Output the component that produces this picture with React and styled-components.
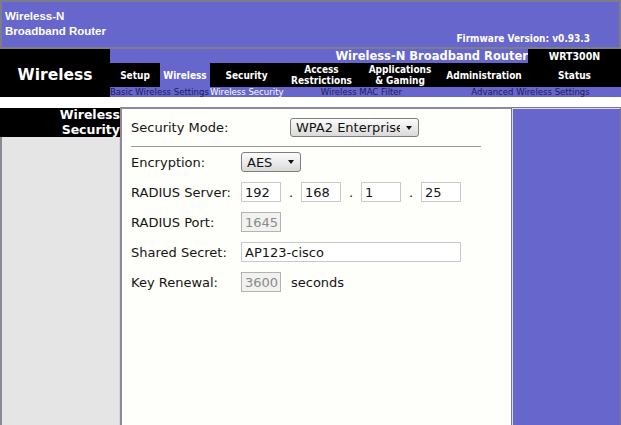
import React from "react";
import styled, { createGlobalStyle } from "styled-components";

const GlobalStyle = createGlobalStyle`
  html, body {
    margin: 0;
    padding: 0;
    background: #ffffff;
    font-family: "DejaVu Sans", Verdana, sans-serif;
  }
`;

const PURPLE = "#6666cc";

const tabs = [
  { label: "Setup", w: 50 },
  { label: "Wireless", w: 50, active: true },
  { label: "Security", w: 73 },
  { label: ["Access", "Restrictions"], w: 77 },
  { label: ["Applications", "& Gaming"], w: 80 },
  { label: "Administration", w: 88 },
  { label: "Status", w: 93 },
];

const subTabs = [
  { label: "Basic Wireless Settings", w: 100, align: "left" },
  { label: "Wireless Security", w: 73, align: "left", active: true },
  { label: "Wireless MAC Filter", w: 157, align: "center" },
  { label: "Advanced Wireless Settings", w: 181, align: "center" },
];

const App = () => {
  return (
    <Page>
      <GlobalStyle />
      <Header>
        <Product>
          Wireless-N
          <br />
          Broadband Router
        </Product>
        <Firmware>Firmware Version: v0.93.3</Firmware>
      </Header>

      <NavBand>
        <Brand>Wireless</Brand>
        <NavRight>
          <TitleBar>
            <TitleCell>Wireless-N Broadband Router</TitleCell>
            <ModelCell>WRT300N</ModelCell>
          </TitleBar>
          <TabRow>
            {tabs.map((t, i) => (
              <Tab key={i} $w={t.w} $active={t.active}>
                {Array.isArray(t.label) ? (
                  <span>
                    {t.label[0]}
                    <br />
                    {t.label[1]}
                  </span>
                ) : (
                  t.label
                )}
              </Tab>
            ))}
          </TabRow>
          <SubRow>
            {subTabs.map((s, i) => (
              <SubTab key={i} $w={s.w} $align={s.align} $active={s.active}>
                {s.label}
              </SubTab>
            ))}
          </SubRow>
        </NavRight>
      </NavBand>

      <Spacer />

      <Main>
        <Side>
          <SideTitle>
            Wireless
            <br />
            Security
          </SideTitle>
          <SidePanel />
        </Side>

        <Content>
          <ModeRow>
            <ModeLabel>Security Mode:</ModeLabel>
            <Select $w={129}>
              <SelectText>WPA2 Enterprise</SelectText>
              <Arrow />
            </Select>
          </ModeRow>
          <Rule />
          <FieldGrid>
            <Label>Encryption:</Label>
            <Select $w={60} $h={20}>
              <SelectText>AES</SelectText>
              <Arrow />
            </Select>

            <Label>RADIUS Server:</Label>
            <IpGroup>
              <TextBox $w={40} defaultValue="192" readOnly />
              <Dot>.</Dot>
              <TextBox $w={40} defaultValue="168" readOnly />
              <Dot>.</Dot>
              <TextBox $w={40} defaultValue="1" readOnly />
              <Dot>.</Dot>
              <TextBox $w={40} defaultValue="25" readOnly />
            </IpGroup>

            <Label>RADIUS Port:</Label>
            <TextBox $w={40} defaultValue="1645" disabled />

            <Label>Shared Secret:</Label>
            <TextBox $w={220} defaultValue="AP123-cisco" readOnly />

            <Label>Key Renewal:</Label>
            <IpGroup>
              <TextBox $w={40} defaultValue="3600" disabled />
              <Unit>seconds</Unit>
            </IpGroup>
          </FieldGrid>
        </Content>

        <Aside />
      </Main>
    </Page>
  );
};

export default App;

const Page = styled.div`
  width: 621px;
  overflow: hidden;
`;

const Header = styled.header`
  height: 49px;
  box-sizing: border-box;
  background: ${PURPLE};
  border: 2px solid #7c7c8a;
  display: flex;
  justify-content: space-between;
  color: #ffffff;
`;

const Product = styled.div`
  font: bold 11.5px/15px "Liberation Sans", Arial, sans-serif;
  padding: 7px 0 0 3px;
`;

const Firmware = styled.div`
  align-self: flex-end;
  font-family: "DejaVu Sans Condensed", "DejaVu Sans", sans-serif;
  font-stretch: condensed;
  font-weight: bold;
  font-size: 10px;
  line-height: 12px;
  padding: 0 29px 2px 0;
`;

const NavBand = styled.nav`
  display: flex;
  height: 48px;
`;

const Brand = styled.div`
  width: 110px;
  background: #000000;
  color: #ffffff;
  font: bold 15.5px "DejaVu Sans", Verdana, sans-serif;
  display: flex;
  align-items: center;
  justify-content: center;
  padding-top: 4px;
  box-sizing: border-box;
`;

const NavRight = styled.div`
  flex: 1;
  display: flex;
  flex-direction: column;
`;

const TitleBar = styled.div`
  display: flex;
  height: 14px;
`;

const TitleCell = styled.div`
  flex: 1;
  background: ${PURPLE};
  color: #ffffff;
  text-align: right;
  font: bold 11.5px/14px "DejaVu Sans", Verdana, sans-serif;
  white-space: nowrap;
`;

const ModelCell = styled.div`
  width: 93px;
  background: #000000;
  color: #ffffff;
  text-align: center;
  font-family: "DejaVu Sans Condensed", "DejaVu Sans", sans-serif;
  font-stretch: condensed;
  font-weight: bold;
  font-size: 10.5px;
  line-height: 14px;
`;

const TabRow = styled.div`
  display: flex;
  height: 24px;
  background: #000000;
`;

const Tab = styled.div`
  width: ${(p) => p.$w}px;
  background: ${(p) => (p.$active ? PURPLE : "#000000")};
  color: #ffffff;
  display: flex;
  align-items: center;
  justify-content: center;
  text-align: center;
  font-family: "DejaVu Sans Condensed", "DejaVu Sans", sans-serif;
  font-stretch: condensed;
  font-weight: bold;
  font-size: 10px;
  line-height: 11px;
  white-space: nowrap;
`;

const SubRow = styled.div`
  display: flex;
  height: 10px;
  background: ${PURPLE};
`;

const SubTab = styled.div`
  width: ${(p) => p.$w}px;
  text-align: ${(p) => p.$align};
  color: ${(p) => (p.$active ? "#ffffff" : "#1b1b5e")};
  font-family: "DejaVu Sans Condensed", "DejaVu Sans", sans-serif;
  font-stretch: condensed;
  font-size: 9.5px;
  line-height: 10px;
  white-space: nowrap;
`;

const Spacer = styled.div`
  height: 10px;
`;

const Main = styled.main`
  display: flex;
  height: 330px;
`;

const Side = styled.div`
  width: 120px;
  display: flex;
  flex-direction: column;
  padding-top: 1px;
  box-sizing: border-box;
`;

const SideTitle = styled.div`
  height: 29px;
  background: #000000;
  color: #ffffff;
  text-align: right;
  font: bold 12.5px/14.5px "DejaVu Sans", Verdana, sans-serif;
  white-space: nowrap;
  overflow: hidden;
`;

const SidePanel = styled.div`
  flex: 1;
  background: #e5e5e5;
  border-left: 2px solid #8a8a96;
  border-right: 1px solid #d6d6d6;
`;

const Content = styled.section`
  width: 391px;
  box-sizing: border-box;
  background: #fefefa;
  border-left: 2px solid #8b8b95;
  border-top: 2px solid #8b8b95;
  padding: 9px 0 0 9px;
  color: #151515;
  font: 13px "DejaVu Sans", Verdana, sans-serif;
`;

const ModeRow = styled.div`
  display: flex;
  align-items: center;
  height: 19px;
`;

const ModeLabel = styled.div`
  width: 159px;
`;

const Rule = styled.div`
  width: 350px;
  height: 1px;
  background: #9a9a9a;
  margin: 9px 0 5px;
`;

const FieldGrid = styled.div`
  display: grid;
  grid-template-columns: 110px auto;
  grid-auto-rows: 20px;
  row-gap: 10px;
  align-items: center;
  justify-items: start;
`;

const Label = styled.div`
  white-space: nowrap;
`;

const Select = styled.div`
  width: ${(p) => p.$w}px;
  height: ${(p) => p.$h || 19}px;
  box-sizing: border-box;
  display: flex;
  align-items: center;
  border: 1px solid #7e7e7e;
  border-radius: 3px;
  background: linear-gradient(#fbfbfb, #ececec 50%, #d9d9d9);
  padding-left: 5px;
`;

const SelectText = styled.span`
  flex: 1;
  overflow: hidden;
  white-space: nowrap;
  color: #111;
`;

const Arrow = styled.span`
  width: 18px;
  display: flex;
  justify-content: center;
  &::before {
    content: "";
    border-left: 3.5px solid transparent;
    border-right: 3.5px solid transparent;
    border-top: 4px solid #111;
  }
`;

const IpGroup = styled.div`
  display: flex;
  align-items: center;
`;

const TextBox = styled.input`
  width: ${(p) => p.$w}px;
  height: 20px;
  box-sizing: border-box;
  margin: 0;
  padding: 0 0 0 3px;
  border: 1px solid #c9c9c9;
  background: #ffffff;
  color: #151515;
  font: 13px "DejaVu Sans", Verdana, sans-serif;
  outline: none;

  &:disabled {
    background: #f1f1ef;
    border-color: #b3b3b3;
    color: #8a8a8a;
  }
`;

const Dot = styled.span`
  width: 20px;
  text-align: center;
`;

const Unit = styled.span`
  margin-left: 10px;
`;

const Aside = styled.aside`
  width: 110px;
  box-sizing: border-box;
  background: ${PURPLE};
  border: 1px solid #7a7a88;
  box-shadow: inset 1px 1px 0 #d8d8ef;
`;
